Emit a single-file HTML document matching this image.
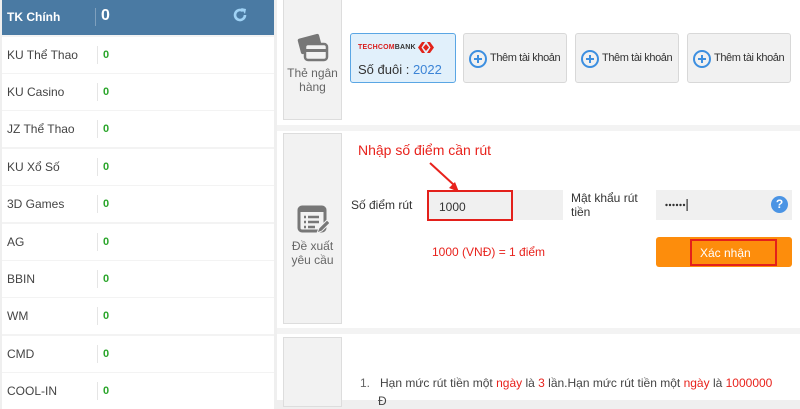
<!DOCTYPE html>
<html><head><meta charset="utf-8"><style>
*{box-sizing:border-box;margin:0;padding:0}
body{width:800px;height:400px;overflow:hidden;background:#efefef;font-family:"Liberation Sans",Arial,sans-serif;position:relative;color:#333}
.abs{position:absolute}
.side{left:2px;top:0;width:272px;height:400px;background:#f3f3f3}
.hdr{left:2px;top:0;width:272px;height:35px;background:#4a7aa3;color:#fff;font-weight:bold}
.row{left:2px;width:272px;height:36px;background:#fff;font-size:12px;color:#444}
.row .n{position:absolute;left:5px;top:11px}
.row .v{position:absolute;left:95px;top:9px;height:18px;border-left:1px solid #e5e5e5;padding-left:5px;padding-top:3px;color:#2aa52a;font-weight:bold;font-size:11px}
.main{left:277px;top:0;width:523px;height:400px;background:#fff}
.band{left:277px;width:523px;height:6px;background:#f3f3f3}
.tile{left:283px;width:59px;background:#f2f2f2;border:1px solid #ddd;text-align:center;color:#666;font-size:12px;line-height:14px}
.btn{top:33px;width:104px;height:50px;background:#f1f1f1;border:1px solid #d8d8d8;border-radius:3px;font-size:11px;color:#333;white-space:nowrap}
.btn .c{position:absolute;left:5px;top:16px;width:18px;height:18px;border:2px solid #3d8fe0;border-radius:50%}
.btn .c:before{content:"";position:absolute;left:3px;top:6px;width:8px;height:2px;background:#3d8fe0}
.btn .c:after{content:"";position:absolute;left:6px;top:3px;width:2px;height:8px;background:#3d8fe0}
.btn span{position:absolute;left:26px;top:18px;letter-spacing:-0.4px}
.red{color:#e8221c}
</style></head><body>
<div class="abs side"></div>
<div class="abs hdr"><span class="abs" style="left:5px;top:10px;font-size:12px">TK Chính</span><span class="abs" style="left:93px;top:8px;height:18px;border-left:1px solid #7fa0bd"></span><span class="abs" style="left:99px;top:7px;font-size:16px">0</span>
<svg class="abs" style="left:229px;top:6px" width="18" height="18" viewBox="0 0 18 18"><path d="M14 9a5 5 0 1 1-2-4" fill="none" stroke="#9fd2f5" stroke-width="2.6"/><path d="M10 2l5 1-1 5z" fill="#9fd2f5"/></svg></div>
<div class="abs row" style="top:37px"><span class="n">KU Thể Thao</span><span class="v">0</span></div>
<div class="abs row" style="top:74px"><span class="n">KU Casino</span><span class="v">0</span></div>
<div class="abs row" style="top:111px"><span class="n">JZ Thể Thao</span><span class="v">0</span></div>
<div class="abs row" style="top:149px"><span class="n">KU Xổ Số</span><span class="v">0</span></div>
<div class="abs row" style="top:186px"><span class="n">3D Games</span><span class="v">0</span></div>
<div class="abs row" style="top:224px"><span class="n">AG</span><span class="v">0</span></div>
<div class="abs row" style="top:261px"><span class="n">BBIN</span><span class="v">0</span></div>
<div class="abs row" style="top:298px"><span class="n">WM</span><span class="v">0</span></div>
<div class="abs row" style="top:336px"><span class="n">CMD</span><span class="v">0</span></div>
<div class="abs row" style="top:373px"><span class="n">COOL-IN</span><span class="v">0</span></div>

<div class="abs main"></div>
<div class="abs band" style="top:125px"></div>
<div class="abs band" style="top:328px"></div>

<div class="abs tile" style="top:-1px;height:121px">
<svg style="margin-top:33px" width="34" height="30" viewBox="0 0 34 30"><rect x="3" y="3" width="22" height="16" rx="2" fill="#777" transform="rotate(-15 14 11)"/><rect x="9" y="11" width="22" height="16" rx="3" fill="#f2f2f2" stroke="#777" stroke-width="2.5"/><rect x="9" y="16" width="22" height="3" fill="#777"/></svg>
<div>Thẻ ngân<br>hàng</div></div>
<div class="abs" style="left:350px;top:33px;width:106px;height:50px;background:#e1f0fb;border:1px solid #5aa6e4;border-radius:3px">
<span class="abs" style="left:7px;top:10px;font-size:7px;font-weight:bold;color:#d81e1e;letter-spacing:0.2px">TECHCOM<span style="color:#333">BANK</span></span>
<svg class="abs" style="left:67px;top:8px" width="16" height="11" viewBox="0 0 16 11"><path d="M4 0L0 5.5 4 11h3L3.5 5.5 7 0zM12 0l4 5.5-4 5.5H9l3.5-5.5L9 0z M5 5.5L8 2l3 3.5L8 9z" fill="#e2231a"/></svg>
<span class="abs" style="left:7px;top:28px;font-size:13px;color:#333">Số đuôi : <span style="color:#3c84d6">2022</span></span></div>
<div class="abs btn" style="left:463px"><i class="c"></i><span>Thêm tài khoản</span></div>
<div class="abs btn" style="left:575px"><i class="c"></i><span>Thêm tài khoản</span></div>
<div class="abs btn" style="left:687px"><i class="c"></i><span>Thêm tài khoản</span></div>

<div class="abs tile" style="top:133px;height:191px">
<svg style="margin-top:70px" width="32" height="32" viewBox="0 0 32 32"><rect x="2" y="3" width="26" height="24" rx="3" fill="none" stroke="#777" stroke-width="3"/><rect x="2" y="3" width="26" height="5" fill="#777"/><path d="M7 13h2M11 13h11M7 18h2M11 18h11M7 23h2M11 23h7" stroke="#777" stroke-width="2.4"/><path d="M20 29l2-5 8-8 3 3-8 8z" fill="#777" stroke="#f2f2f2" stroke-width="1"/></svg>
<div>Đề xuất<br>yêu cầu</div></div>
<div class="abs red" style="left:358px;top:142px;font-size:14px">Nhập số điểm cần rút</div>
<svg class="abs" style="left:425px;top:160px" width="40" height="35"><path d="M5 3L29 25" stroke="#e8221c" stroke-width="2"/><path d="M24 28l10 4-4-10z" fill="#e8221c"/></svg>
<div class="abs" style="left:351px;top:198px;font-size:12px">Số điểm rút</div>
<div class="abs" style="left:427px;top:190px;width:136px;height:30px;background:#f0f0f0"></div>
<div class="abs" style="left:427px;top:190px;width:86px;height:31px;border:2px solid #e3201b;font-size:12px;padding:8px 0 0 10px">1000</div>
<div class="abs" style="left:571px;top:191px;font-size:12px;line-height:14px">Mật khẩu rút<br>tiền</div>
<div class="abs" style="left:656px;top:190px;width:136px;height:30px;background:#f0f0f0"></div>
<svg class="abs" style="left:665px;top:198px" width="30" height="14"><g fill="#333"><circle cx="1.5" cy="7" r="1.2"/><circle cx="5" cy="7" r="1.2"/><circle cx="8.5" cy="7" r="1.2"/><circle cx="12" cy="7" r="1.2"/><circle cx="15.5" cy="7" r="1.2"/><circle cx="19" cy="7" r="1.2"/></g><rect x="21.5" y="1" width="1.2" height="12" fill="#333"/></svg>
<div class="abs" style="left:771px;top:196px;width:17px;height:17px;border-radius:50%;background:#4b94e4;color:#fff;font-size:12px;font-weight:bold;text-align:center;line-height:17px">?</div>
<div class="abs red" style="left:432px;top:245px;font-size:12px">1000 (VNĐ) = 1 điểm</div>
<div class="abs" style="left:656px;top:237px;width:136px;height:30px;background:#fd8d0c;border-radius:3px"></div>
<div class="abs" style="left:690px;top:239px;width:87px;height:27px;border:2px solid #e3201b;color:#fff;font-size:12px;padding:5px 0 0 8px">Xác nhận</div>

<div class="abs tile" style="top:337px;height:70px"></div>
<div class="abs" style="left:360px;top:376px;font-size:12px;color:#444;white-space:nowrap"><span style="color:#666">1.</span>&nbsp;&nbsp; Hạn mức rút tiền một <span class="red">ngày</span> là <span class="red">3</span> lần.Hạn mức rút tiền một <span class="red">ngày</span> là <span class="red">1000000</span></div>
<div class="abs" style="left:378px;top:394px;font-size:12px;color:#444">Đ</div>
</body></html>
